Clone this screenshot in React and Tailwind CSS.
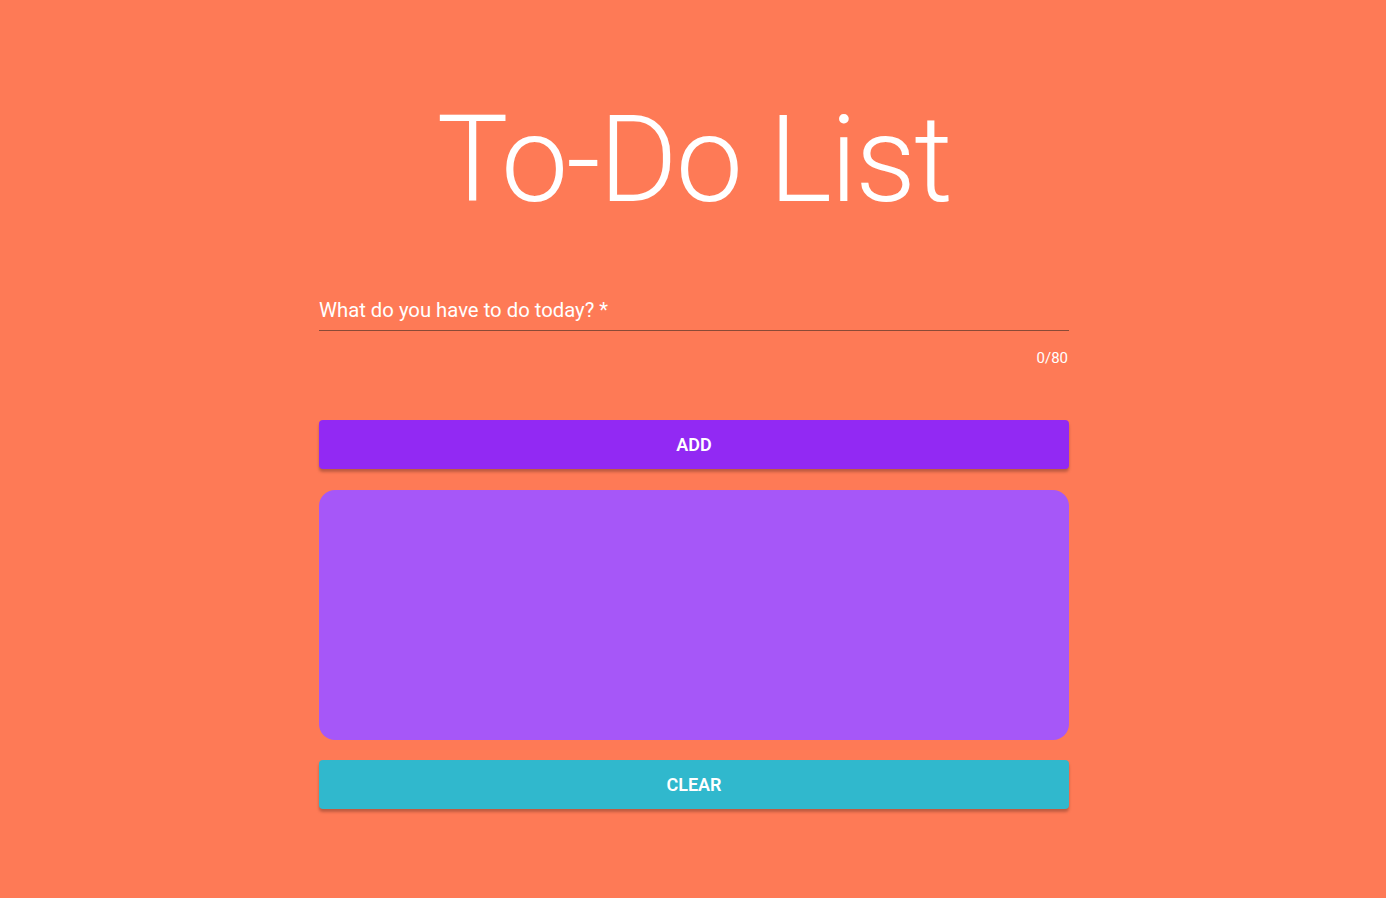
import React, { useState } from 'react'

const App = () => {
    const [todo, setTodo] = useState('');

    return (
        <div className="min-h-screen w-full bg-[#fe7a56] font-['Roboto','Liberation_Sans',sans-serif] text-white">
            <div className="flex justify-center pl-[2px]">
                <div className="w-[750px] pt-[100px]">
                    <h1 className="text-center text-[120px] font-light leading-none tracking-[-1.8px]">To-Do List</h1>

                    <div className="mt-[78px]">
                        <div className="border-b border-[#8a4a36] pb-[6px]">
                            <input
                                value={todo}
                                onChange={(e) => setTodo(e.target.value.slice(0, 80))}
                                placeholder="What do you have to do today? *"
                                className="w-full bg-transparent text-[20.3px] leading-[24px] text-white placeholder-white outline-none"
                            />
                        </div>
                        <p className="mt-[18px] text-right text-[15px] leading-[18px] pr-px">{todo.length}/80</p>
                    </div>

                    {/* add */}
                    <button className="mt-[53px] flex h-[49px] w-full items-center justify-center rounded bg-[#9229f3] text-[18px] font-semibold shadow-[0_3px_3px_rgba(0,0,0,0.25)]">
                        ADD
                    </button>

                    <div className="mt-[21px] h-[250px] rounded-2xl bg-[#a657f8]"></div>

                    <button className="mt-[20px] flex h-[49px] w-full items-center justify-center rounded bg-[#30b8cd] text-[18px] font-semibold shadow-[0_3px_3px_rgba(0,0,0,0.25)]">
                        CLEAR
                    </button>
                </div>
            </div>
        </div>
    )
}

export default App
